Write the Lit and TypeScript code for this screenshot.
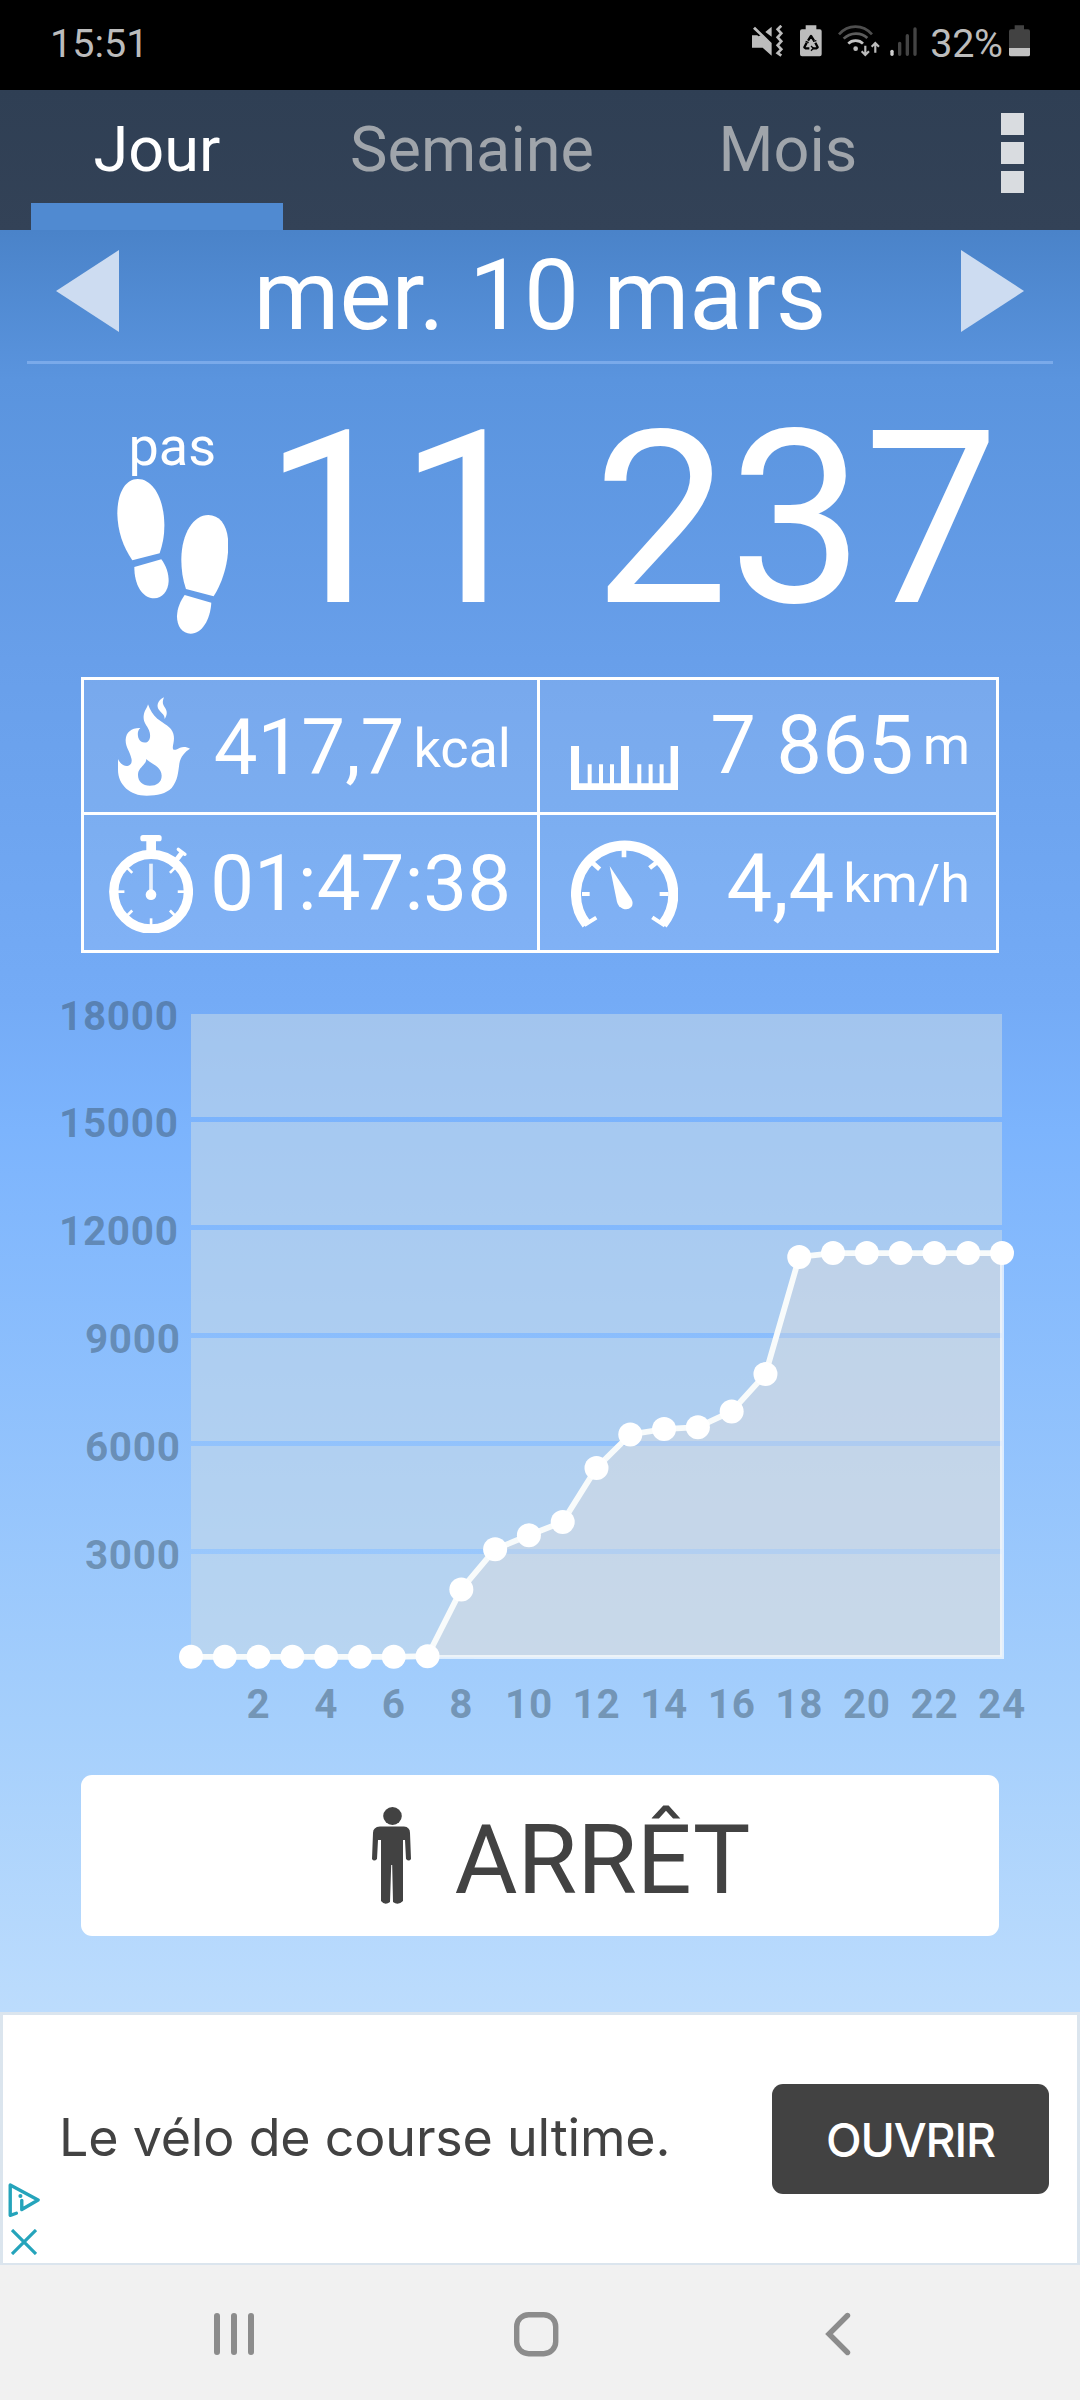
import { LitElement, html, svg, css } from "lit";
import { customElement } from "lit/decorators.js";

const X0 = 191;
const STEP_X = 811 / 24;
const hourX = (h: number) => X0 + h * STEP_X;

const POINTS: number[] = [
  1656.8, 1656.8, 1656.8, 1656.8, 1656.8, 1656.8, 1656.8, 1656.2, 1589.4, 1549.2, 1535.3, 1521.9, 1467.9,
  1434.4, 1429.1, 1427.2, 1411.4, 1374.1, 1256.9, 1253.1, 1253.1, 1253.1, 1253.1, 1253.1, 1253.1,
];
const BANDS: [number, number][] = [
  [1014, 1117], [1122, 1225], [1230, 1333], [1338, 1441], [1446, 1549], [1554, 1657],
];
const Y_LABELS: [string, number, number][] = [
  ["18000", 1030, 178.7], ["15000", 1137, 178.7], ["12000", 1245, 178.7],
  ["9000", 1353, 180.7], ["6000", 1461, 180.7], ["3000", 1569, 180.7],
];
const HOURS = [2, 4, 6, 8, 10, 12, 14, 16, 18, 20, 22, 24];

@customElement("steps-chart")
class StepsChart extends LitElement {
  static styles = css`
    :host { display: block; }
    .chart { display: block; width: 1080px; height: 822px; }
    .band { fill: rgba(208, 221, 230, 0.5); }
    .area { fill: rgba(240, 226, 214, 0.3); stroke: rgba(255, 255, 255, 0.68); stroke-width: 4; }
    .line { fill: none; stroke: #f8fbfb; stroke-width: 5.8; }
    .dot { fill: #fff; }
    .label { font: 700 40.5px Roboto, sans-serif; letter-spacing: 0.7px; fill: rgba(54, 77, 94, 0.44); }
    .end { text-anchor: end; }
    .mid { text-anchor: middle; }
  `;
  render() {
    const pts = POINTS.map((y, h) => `${hourX(h).toFixed(1)},${y}`).join(" ");
    return html`
      <svg class="chart" viewBox="0 953 1080 822">
        ${BANDS.map(([a, b]) => svg`<rect class="band" x=${X0} y=${a} width="811" height=${b - a}></rect>`)}
        <polygon class="area" points="${pts} 1002,1657"></polygon>
        <polyline class="line" points=${pts}></polyline>
        ${POINTS.map((y, h) => svg`<circle class="dot" cx=${hourX(h)} cy=${y} r="12"></circle>`)}
        ${Y_LABELS.map(([t, y, x]) => svg`<text class="label end" x=${x} y=${y}>${t}</text>`)}
        ${HOURS.map((h) => svg`<text class="label mid" x=${hourX(h)} y="1718">${h}</text>`)}
      </svg>
    `;
  }
}

const rotatedTicks = (cx: number, cy: number, r1: number, r2: number, w: number, degs: number[]) =>
  degs.map(
    (d) => svg`<line x1=${cx + r1} y1=${cy} x2=${cx + r2} y2=${cy} stroke="#fff" stroke-width=${w}
      transform="rotate(${d} ${cx} ${cy})"></line>`
  );

@customElement("app-root")
class AppRoot extends LitElement {
  static styles = css`
    :host { display: block; width: 1080px; height: 2400px; overflow: hidden; font-family: Roboto, "Noto Sans", sans-serif; color: #fff; }
    svg { display: block; flex: none; }
    .screen { display: flex; flex-direction: column; height: 2400px; }
    .status { height: 90px; box-sizing: border-box; background: #000; color: #bcbcbc; display: flex; justify-content: space-between; align-items: flex-start; padding: 23px 50px 0 50px; font-size: 39.5px; line-height: 40px; }
    .tray { display: flex; align-items: flex-start; }
    .tray svg { margin-top: 2px; height: 32px; }
    .mute { width: 31.3px; margin-right: 16.3px; }
    .saver { width: 21.7px; margin-right: 16px; }
    .wifi { width: 42.3px; margin-right: 10.5px; }
    .signal { width: 27px; margin-right: 13px; }
    .pct { letter-spacing: -0.4px; margin-right: 6.5px; padding-top: 1px; }
    .clock { padding-top: 1px; }
    .tabs { height: 140px; box-sizing: border-box; background: linear-gradient(#2f3f54, #334257); display: flex; padding-left: 31px; font-size: 63px; line-height: 64px; color: #a0a5ab; text-align: center; }
    .tab { box-sizing: border-box; height: 140px; padding-top: 28px; border-bottom: 0 solid #508ad1; }
    .tab.day { width: 252px; color: #fff; border-bottom-width: 27px; }
    .tab.week { width: 378px; }
    .tab.month { width: 254px; }
    .menu { display: flex; flex-direction: column; gap: 7px; margin: 23px 0 0 86px; }
    .sq { width: 23px; height: 22px; background: #d9dce0; }
    .body { height: 1782px; background: linear-gradient(#4a83c9 0, #5a94de 150px, #689fea 430px, #74abf6 770px, #7cb4fd 900px, #a5cffc 1490px, #bcdcfd 1782px); }
    .date { height: 134px; box-sizing: border-box; margin: 0 27px; border-bottom: 3px solid #7aaaea; display: flex; justify-content: space-between; align-items: flex-start; padding: 0 29px; font-size: 98px; line-height: 98px; }
    .date svg { margin-top: 20px; }
    .day-name { padding-top: 17px; }
    .steps { height: 313px; display: flex; justify-content: space-between; padding: 0 81px 0 116.7px; }
    .unit-col { display: flex; flex-direction: column; align-items: center; width: 111.3px; padding-top: 55.5px; font-size: 54px; line-height: 54px; }
    .feet { margin-top: 5.8px; }
    .count { font-size: 240.5px; line-height: 240px; padding-top: 36px; white-space: nowrap; }
    .stats { box-sizing: border-box; width: 918px; height: 276px; margin-left: 81px; border: 3px solid #fff; background: rgba(255, 255, 255, 0.1); display: grid; grid-template-columns: 456px 456px; grid-template-rows: 135px 135px; }
    .cell { box-sizing: border-box; display: flex; justify-content: space-between; align-items: flex-start; padding-right: 26px; white-space: nowrap; }
    .left { border-right: 3px solid #fff; }
    .top { border-bottom: 3px solid #fff; }
    .reading { display: flex; align-items: flex-start; gap: 9px; }
    .value { font-size: 78px; line-height: 78px; margin-top: 28.5px; }
    .value.time { margin-top: 30px; }
    .value.large { font-size: 81.5px; line-height: 82px; margin-top: 23.5px; }
    .value.speed { margin-top: 27.5px; }
    .unit { font-size: 54px; line-height: 55px; margin-top: 40.5px; }
    .unit.metre { margin-top: 38px; }
    .flame { margin: 17.3px 0 0 34px; }
    .watch { margin: 19.7px 0 0 25px; }
    .ruler { margin: 65.7px 0 0 30.7px; }
    .gauge { margin: 25px 0 0 30.7px; }
    .stop { box-sizing: border-box; width: 918px; height: 161px; margin-left: 81px; background: #fff; border-radius: 11px; color: #424242; display: flex; padding-left: 291px; font-size: 96.7px; line-height: 98px; }
    .man { margin-top: 31.5px; }
    .stop-text { padding: 36px 0 0 43.5px; }
    .ad { box-sizing: border-box; height: 253px; background: #fff; border: 3px solid #dbe5ee; border-bottom-width: 2px; display: flex; font-family: Inter, sans-serif; color: #424242; }
    .ad-side { width: 56px; padding: 168px 0 0 4.5px; box-sizing: border-box; }
    .ad-x { margin: 12px 0 0 3px; }
    .ad-text { width: 713px; padding-top: 91px; font-size: 52px; line-height: 64px; letter-spacing: -0.2px; white-space: nowrap; }
    .ad-btn { width: 277px; height: 110px; margin-top: 69px; background: #424242; color: #fff; border-radius: 11px; font: 500 46.5px/112px Inter, sans-serif; letter-spacing: -1.2px; text-align: center; }
    .nav { height: 135px; background: #f1f1f1; display: flex; padding: 46px 0 0 213px; box-sizing: border-box; }
    .home { margin: 0 266px 0 258px; }
  `;

  render() {
    return html`
      <div class="screen">
        <div class="status">
          <span class="clock">15:51</span>
          <div class="tray">
            <svg class="mute" viewBox="64 45 94 96" fill="#bcbcbc">
              <path d="M64 76H80L123 118V137L96 113H64Z M67 56L73 50L123 99V108Z M84 78L96 76L123 102V120L84 92Z M123 50V80L104 66Z"></path>
              <path d="M152 47L141 58L152 70L141 82L152 94L141 106L152 118L141 129L152 137" fill="none" stroke="#bcbcbc" stroke-width="8"></path>
            </svg>
            <svg class="saver" viewBox="207 45 65 96">
              <path d="M224 46H256V58H266Q272 58 272 64V133Q272 139 266 139H213Q207 139 207 133V64Q207 58 213 58H224Z" fill="#bcbcbc"></path>
              <path d="M231 92L240 78L249 92M253 98L260 112L256 115H245M235 115H224L220 112L227 98" fill="none" stroke="#000" stroke-width="7" stroke-linejoin="round"></path>
              <path d="M224 94L233 98M240 108L247 115L240 122M256 92L246 94" fill="none" stroke="#000" stroke-width="4"></path>
            </svg>
            <svg class="wifi" viewBox="320 45 127 96" fill="none" stroke-width="8">
              <path d="M323 73C350 42 395 42 422 73" stroke="#4e4e4e"></path>
              <path d="M337 86C357 66 390 66 408 84" stroke="#5c5c5c"></path>
              <path d="M351 101C362 89 384 89 395 101" stroke="#c4c4c4"></path>
              <circle cx="373" cy="116" r="7" fill="#bcbcbc"></circle>
              <path d="M402 107V134M391 124L402 135L413 124M432 128V100M421 110L432 99L443 110" stroke="#bcbcbc" stroke-width="6.5"></path>
            </svg>
            <svg class="signal" viewBox="478 45 81 96" stroke-width="10" stroke-linecap="round">
              <path d="M484 124V133" stroke="#d0d0d0"></path>
              <path d="M507 100V133M530 77V133M553 57V133" stroke="#444"></path>
            </svg>
            <span class="pct">32%</span>
            <svg width="21" viewBox="837 45 63 96">
              <path d="M854 46H882V58H894Q900 58 900 64V114H837V64Q837 58 843 58H854Z" fill="#424242"></path>
              <path d="M837 114H900V134Q900 139 894 139H843Q837 139 837 134Z" fill="#c0c0c0"></path>
            </svg>
          </div>
        </div>
        <div class="tabs">
          <div class="tab day">Jour</div>
          <div class="tab week">Semaine</div>
          <div class="tab month">Mois</div>
          <div class="menu"><div class="sq"></div><div class="sq"></div><div class="sq"></div></div>
        </div>
        <div class="body">
          <div class="date">
            <svg width="63" height="82" viewBox="0 0 63 82"><path d="M0 41L63 0V82Z" fill="#cddcf1"></path></svg>
            <span class="day-name">mer. 10 mars</span>
            <svg width="63" height="82" viewBox="0 0 63 82"><path d="M63 41L0 0V82Z" fill="#cddcf1"></path></svg>
          </div>
          <div class="steps">
            <div class="unit-col">
              <span>pas</span>
              <svg class="feet" width="111.3" height="154.7" viewBox="170 238 334 464" fill="#fff">
                <path d="M232 238C195 238 171 280 171 342C172 395 188 440 216 482L298 461C308 430 313 405 312 370C310 300 280 238 232 238Z"></path>
                <path d="M222 502L303 479C318 500 325 520 325 545C324 575 305 596 282 596C245 596 222 555 222 502Z"></path>
                <path d="M444 346C400 346 364 400 363 478C363 510 367 540 377 568L460 590C488 545 504 490 504 435C504 380 480 346 444 346Z"></path>
                <path d="M373 586L453 609C450 660 425 702 391 702C366 702 350 680 350 650C351 625 360 605 373 586Z"></path>
              </svg>
            </div>
            <div class="count">11 237</div>
          </div>
          <div class="stats">
            <div class="cell left top">
              <svg class="flame" width="72" height="98.7" viewBox="144 112 216 296" fill="#fff">
                <path fill-rule="evenodd" d="M144 298C150 312 162 320 172 319C184 317 187 306 184 296C180 275 166 262 167 240C168 218 185 204 211 205C203 212 202 222 205 234C210 248 224 252 233 246C242 240 242 224 237 212C230 195 219 190 221 168C223 152 232 145 234 134C240 150 248 165 262 177C282 193 304 200 310 222C316 244 306 256 309 268C312 274 322 268 330 264C340 260 350 261 360 267C345 276 332 290 328 312C324 340 324 360 305 385C288 402 262 408 230 408C180 408 144 375 144 330Z M229 298C240 311 275 320 275 348C275 368 260 378 240 378C218 378 204 366 204 346C204 330 216 322 222 314C227 308 229 304 229 298Z"></path>
                <path d="M282 113C262 122 258 140 268 152C276 162 284 166 284 178C292 166 292 156 286 146C278 134 276 128 282 113Z"></path>
              </svg>
              <div class="reading"><span class="value">417,7</span><span class="unit">kcal</span></div>
            </div>
            <div class="cell top">
              <svg class="ruler" width="107.3" height="44.3" viewBox="122 257 322 133" fill="#fff">
                <path d="M122 257H146V369H172V312H184V369H206V312H218V369H239V312H251V369H272V257H296V369H321V312H333V369H355V312H367V369H388V312H400V369H421V257H444V390H122Z"></path>
              </svg>
              <div class="reading"><span class="value large">7 865</span><span class="unit metre">m</span></div>
            </div>
            <div class="cell left">
              <svg class="watch" width="84.3" height="98.7" viewBox="117 524 253 296" fill="#fff">
                <circle cx="243.3" cy="694" r="112" fill="none" stroke="#fff" stroke-width="28"></circle>
                <rect x="211" y="524" width="64" height="19" rx="8"></rect>
                <rect x="229" y="536" width="29" height="44"></rect>
                <path d="M314 606L336 577" stroke="#fff" stroke-width="15"></path>
                <path d="M325 567L345 582" stroke="#fff" stroke-width="10" stroke-linecap="round"></path>
                ${rotatedTicks(243.3, 694, 80, 102, 8, [0, 45, 90, 135, 180, 225, 315])}
                <path d="M243 610V700" stroke="#fff" stroke-width="11" opacity="0.8"></path>
                <circle cx="243" cy="703" r="16"></circle>
              </svg>
              <div class="reading"><span class="value time">01:47:38</span></div>
            </div>
            <div class="cell">
              <svg class="gauge" width="107.3" height="88" viewBox="122 540 322 264" fill="none" stroke="#fff">
                <path d="M168.7 793A146 146 0 1 1 397.3 793" stroke-width="30"></path>
                <path d="M162 795L198 773M404 797L366 772M155 702H178M388 702H415" stroke-width="12"></path>
                <path d="M281 565V592M185 607L208 628M381 606L358 624" stroke-width="14"></path>
                <path d="M238 618L303 716Q311 731 303 741Q293 751 278 746Q264 741 260 726Z" fill="#fff" stroke="none"></path>
              </svg>
              <div class="reading"><span class="value large speed">4,4</span><span class="unit">km/h</span></div>
            </div>
          </div>
          <steps-chart></steps-chart>
          <div class="stop">
            <svg class="man" width="39" height="98" viewBox="0 0 39 98" fill="#424242">
              <ellipse cx="20.5" cy="9" rx="9.3" ry="9"></ellipse>
              <path d="M8 19.5H32Q38 20 38 26L39 52Q37 55 34 52L33 33H31V94Q26 99 21 95L20.2 58H19.2L18 95Q13 99 9 94V33H6L5 52Q2 55 0 52L1 26Q1 20 8 19.5Z"></path>
            </svg>
            <span class="stop-text">ARRÊT</span>
          </div>
        </div>
        <div class="ad">
          <div class="ad-side">
            <svg width="33" height="34" viewBox="22 549 96 100" fill="none" stroke="#25a4bb" stroke-width="10">
              <path d="M46 638L28 644V555L110 599L62 627V600" stroke-linejoin="round" stroke-linecap="round"></path>
              <circle cx="58" cy="587" r="6" fill="#25a4bb" stroke="none"></circle>
            </svg>
            <svg class="ad-x" width="26" height="26" viewBox="0 0 26 26"><path d="M1 1L25 25M25 1L1 25" stroke="#25a4bb" stroke-width="3.2"></path></svg>
          </div>
          <div class="ad-text">Le vélo de course ultime.</div>
          <div class="ad-btn">OUVRIR</div>
        </div>
        <div class="nav">
          <svg width="42" height="45" viewBox="0 0 42 45"><path d="M4 5V41M21 5V41M38 5V41" stroke="#8c8c8c" stroke-width="6" stroke-linecap="round"></path></svg>
          <svg class="home" width="46" height="46" viewBox="0 0 46 46"><rect x="3.7" y="3.7" width="39" height="39" rx="12" fill="none" stroke="#8c8c8c" stroke-width="5.4"></rect></svg>
          <svg width="26" height="46" viewBox="0 0 26 46"><path d="M22.5 4.5L4 23L22.5 41.5" fill="none" stroke="#8c8c8c" stroke-width="5.4" stroke-linecap="round"></path></svg>
        </div>
      </div>
    `;
  }
}
